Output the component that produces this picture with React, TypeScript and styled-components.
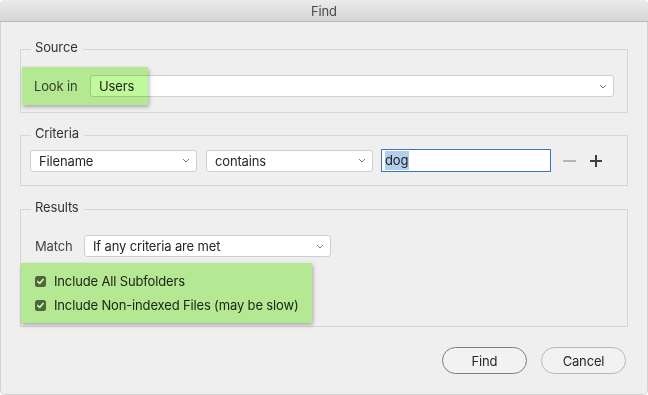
import React from 'react';
import styled, {createGlobalStyle} from 'styled-components';

const FONT = `Inter, "Liberation Sans", Arial, sans-serif`;

const GlobalStyle = createGlobalStyle`
  html, body {
    margin: 0;
    padding: 0;
    background: #ffffff;
  }
  body {
    font-family: ${FONT};
    font-size: 13px;
    letter-spacing: -0.15px;
    color: #262626;
  }
`;

const Chevron = () => (
  <svg width="8" height="5" viewBox="0 0 8 5">
    <path d="M1 1 L4 4 L7 1" fill="none" stroke="#7b7b7b" strokeWidth="1" />
  </svg>
);

const Check = () => (
  <svg width="9" height="9" viewBox="0 0 9 9">
    <path
      d="M1.8 4.6 L3.7 6.4 L7.2 2.4"
      fill="none"
      stroke="#ffffff"
      strokeWidth="1.7"
      strokeLinecap="round"
      strokeLinejoin="round"
    />
  </svg>
);

type SelectProps = {
  value: string;
  width?: number;
  grow?: boolean;
};

const Select = ({value, width, grow}: SelectProps) => (
  <SelectBox $width={width} $grow={grow}>
    <SelectValue>{value}</SelectValue>
    <Chevron />
  </SelectBox>
);

const CheckRow = ({label}: {label: string}) => (
  <CheckItem>
    <CheckBox>
      <Check />
    </CheckBox>
    <span>{label}</span>
  </CheckItem>
);

export default function App() {
  return (
    <>
      <GlobalStyle />
      <Window>
        <TitleBar>Find</TitleBar>
        <Body>
          <Group $gap={0}>
            <Legend>Source</Legend>
            <Content $pad="16px 13px 15px">
              <Row>
                <Highlight $left={-12} $top={-8} $w={126} $h={38} />
                <FieldLabel $w={56}>Look in</FieldLabel>
                <Select value="Users" grow />
              </Row>
            </Content>
          </Group>

          <Group $gap={12}>
            <Legend>Criteria</Legend>
            <Content $pad="4px 9px 13px">
              <Row>
                <Select value="Filename" width={167} />
                <Spacer $w={9} />
                <Select value="contains" width={167} />
                <Spacer $w={8} />
                <TextInput>
                  <Selected>dog</Selected>
                </TextInput>
                <Spacer $w={12} />
                <svg width="13" height="12" viewBox="0 0 13 12">
                  <path d="M0 6 H13" stroke="#b4b4b4" strokeWidth="2" />
                </svg>
                <Spacer $w={14} />
                <svg width="12" height="12" viewBox="0 0 12 12">
                  <path d="M0 6 H12 M6 0 V12" stroke="#3f3f3f" strokeWidth="2" />
                </svg>
              </Row>
            </Content>
          </Group>

          <Group $gap={13}>
            <Legend>Results</Legend>
            <Content $pad="16px 14px 13px">
              <Row>
                <FieldLabel $w={49}>Match</FieldLabel>
                <Select value="If any criteria are met" width={247} />
              </Row>
              <CheckList>
                <Highlight $left={-14} $top={-10} $w={291} $h={60} />
                <CheckRow label="Include All Subfolders" />
                <CheckRow label="Include Non-indexed Files (may be slow)" />
              </CheckList>
            </Content>
          </Group>

          <ButtonRow>
            <Button $primary>Find</Button>
            <Button>Cancel</Button>
          </ButtonRow>
        </Body>
      </Window>
    </>
  );
}

const Window = styled.div`
  width: 648px;
  height: 395px;
  box-sizing: border-box;
  background: #efefef;
  border-radius: 5px;
  overflow: hidden;
  display: flex;
  flex-direction: column;
  box-shadow: inset 0 0 0 1px #d2d2d2;
`;

const TitleBar = styled.div`
  height: 21px;
  flex: none;
  display: flex;
  align-items: center;
  justify-content: center;
  background: linear-gradient(#ebebeb, #d5d5d5);
  border-bottom: 1px solid #b8b8b8;
  color: #4a4a4a;
  font-size: 13px;
`;

const Body = styled.div`
  flex: 1;
  display: flex;
  flex-direction: column;
  padding: 17px 20px 0;
`;

const Group = styled.fieldset<{$gap: number}>`
  margin: ${p => p.$gap}px 0 0;
  padding: 0;
  min-width: 0;
  border: 1px solid #d6d6d6;
`;

const Legend = styled.legend`
  margin-left: 10px;
  padding: 0 5px 4px 4px;
  line-height: 16px;
  font-size: 13px;
  color: #333333;
`;

const Content = styled.div<{$pad: string}>`
  padding: ${p => p.$pad};
  display: flex;
  flex-direction: column;
`;

const Row = styled.div`
  position: relative;
  display: flex;
  align-items: center;
`;

const FieldLabel = styled.span<{$w: number}>`
  flex: none;
  width: ${p => p.$w}px;
  color: #444444;
`;

const Spacer = styled.span<{$w: number}>`
  flex: none;
  width: ${p => p.$w}px;
`;

const SelectBox = styled.div<{$width?: number; $grow?: boolean}>`
  box-sizing: border-box;
  height: 22px;
  ${p => (p.$grow ? 'flex: 1;' : `flex: none; width: ${p.$width}px;`)}
  display: flex;
  align-items: center;
  padding: 0 6px 0 8px;
  background: #ffffff;
  border: 1px solid #cfcfcf;
  border-radius: 3px;
  color: #262626;
`;

const SelectValue = styled.span`
  flex: 1;
  white-space: nowrap;
`;

const TextInput = styled.div`
  box-sizing: border-box;
  flex: none;
  width: 170px;
  height: 23px;
  display: flex;
  align-items: center;
  padding: 0 3px;
  background: #ffffff;
  border: 1px solid #3b76c4;
`;

const Selected = styled.span`
  background: #b3cdef;
  padding: 1px 1px 2px 0;
  color: #222;
`;

const CheckList = styled.div`
  position: relative;
  margin-top: 16px;
  display: flex;
  flex-direction: column;
  gap: 8px;
`;

const CheckItem = styled.div`
  height: 16px;
  display: flex;
  align-items: center;
  gap: 8px;
  color: #262626;
`;

const CheckBox = styled.span`
  flex: none;
  width: 11px;
  height: 11px;
  border-radius: 2.5px;
  background: #686868;
  display: flex;
  align-items: center;
  justify-content: center;
`;

const Highlight = styled.div<{$left: number; $top: number; $w: number; $h: number}>`
  position: absolute;
  left: ${p => p.$left}px;
  top: ${p => p.$top}px;
  width: ${p => p.$w}px;
  height: ${p => p.$h}px;
  background: rgb(192, 248, 156);
  mix-blend-mode: multiply;
  box-shadow: 1px 2px 4px rgba(0, 0, 0, 0.3);
  pointer-events: none;
  z-index: 2;
`;

const ButtonRow = styled.div`
  display: flex;
  justify-content: flex-end;
  gap: 14px;
  margin-top: 20px;
  padding-right: 2px;
`;

const Button = styled.button<{$primary?: boolean}>`
  width: 85px;
  height: 27px;
  border-radius: 14px;
  background: #f2f2f2;
  border: 1px solid ${p => (p.$primary ? '#7d7d7d' : '#b7b7b7')};
  font-family: ${FONT};
  font-size: 13px;
  letter-spacing: -0.15px;
  color: #262626;
  padding: 0;
`;
